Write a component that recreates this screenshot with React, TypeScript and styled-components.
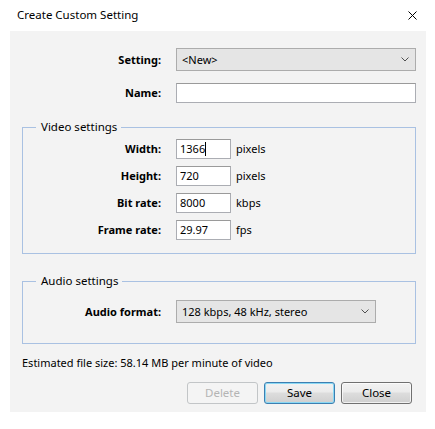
import React from "react";
import styled, { createGlobalStyle, css } from "styled-components";

const FONT = `"Noto Sans", "Open Sans", sans-serif`;

const GlobalStyle = createGlobalStyle`
  html, body { margin: 0; padding: 0; background: #ffffff; }
  body { font-family: ${FONT}; font-size: 11px; color: #000; }
  * { box-sizing: border-box; }
`;

const Window = styled.div`
  width: 435px;
  height: 429px;
  background: #ffffff;
  display: flex;
  flex-direction: column;
`;

const TitleBar = styled.div`
  height: 31px;
  display: flex;
  align-items: center;
  justify-content: space-between;
  padding: 0 18px 1px 17px;
`;

const Title = styled.div`
  font-size: 11.5px;
  line-height: 16px;
  color: #000;
`;

const CloseGlyph = styled.svg`
  width: 9px;
  height: 9px;
  display: block;
`;

const Panel = styled.div`
  margin: 0 9px 0 10px;
  height: 381px;
  background: #f3f3f3;
  padding: 17px 10px 8px 0;
  display: flex;
  flex-direction: column;
`;

const FormGrid = styled.div<{ $labelWidth: number; $gap: number }>`
  display: grid;
  grid-template-columns: ${(p) => p.$labelWidth}px 1fr;
  column-gap: 15px;
  row-gap: ${(p) => p.$gap}px;
  align-items: center;
`;

const Label = styled.div`
  justify-self: end;
  font-weight: 700;
  line-height: 16px;
  white-space: nowrap;
`;

const chevron = css`
  background-image: url("data:image/svg+xml;utf8,<svg xmlns='http://www.w3.org/2000/svg' width='8' height='5' viewBox='0 0 8 5'><path d='M0.5 0.5 L4 4 L7.5 0.5' fill='none' stroke='%23505050' stroke-width='1'/></svg>");
  background-repeat: no-repeat;
  background-position: right 6px center;
`;

const Combo = styled.div<{ $width?: number }>`
  height: 23px;
  width: ${(p) => (p.$width ? `${p.$width}px` : "100%")};
  border: 1px solid #acacac;
  background-color: #e5e5e5;
  ${chevron};
  display: flex;
  align-items: center;
  padding-left: 5px;
  line-height: 16px;
`;

const TextBox = styled.div<{ $width?: number }>`
  height: 20px;
  width: ${(p) => (p.$width ? `${p.$width}px` : "100%")};
  border: 1px solid #abadb3;
  border-top-color: #9a9a9a;
  background: #ffffff;
  display: flex;
  align-items: center;
  padding-left: 3px;
  line-height: 16px;
`;

const Caret = styled.span`
  display: inline-block;
  width: 1px;
  height: 14px;
  background: #000;
`;

const FieldWithUnit = styled.div`
  display: flex;
  align-items: center;
  gap: 5px;
`;

const Unit = styled.span`
  line-height: 16px;
`;

const Group = styled.fieldset<{ $top: number; $pt: number; $pb: number }>`
  margin: ${(p) => p.$top}px 0 0 12px;
  padding: ${(p) => p.$pt}px 0 ${(p) => p.$pb}px 0;
  border: 1px solid #a9c1e2;
  min-width: 0;
`;

const Legend = styled.legend`
  margin-left: 13px;
  padding: 0 4px 0 5px;
  line-height: 16px;
  font-size: 11.5px;
`;

const Estimate = styled.div`
  margin: 11px 0 0 12px;
  line-height: 16px;
`;

const ButtonRow = styled.div`
  margin-top: 11px;
  display: flex;
  justify-content: flex-end;
  gap: 6px;
  padding-right: 4px;
`;

const Button = styled.button<{ $variant?: "default" | "disabled" }>`
  width: 71px;
  height: 22px;
  font-family: ${FONT};
  font-size: 11.5px;
  line-height: 16px;
  padding: 0;
  border-radius: 3px;
  color: #000;
  border: 1px solid #707070;
  background: linear-gradient(#f2f2f2 0%, #ebebeb 45%, #dddddd 50%, #cfcfcf 100%);
  box-shadow: inset 0 0 0 1px rgba(255, 255, 255, 0.7);
  ${(p) =>
    p.$variant === "default" &&
    css`
      border-color: #3c7fb1;
      box-shadow: inset 0 0 0 1px #8ad8f4;
    `}
  ${(p) =>
    p.$variant === "disabled" &&
    css`
      border-color: #c2c5c7;
      background: #f4f4f4;
      color: #b4b4b4;
      box-shadow: none;
    `}
`;

export default function App() {
  return (
    <>
      <GlobalStyle />
      <Window>
        <TitleBar>
          <Title>Create Custom Setting</Title>
          <CloseGlyph viewBox="0 0 9 9">
            <path d="M0.5 0.5 L8.5 8.5 M8.5 0.5 L0.5 8.5" stroke="#000" strokeWidth="1" fill="none" />
          </CloseGlyph>
        </TitleBar>
        <Panel>
          <FormGrid $labelWidth={151} $gap={12}>
            <Label>Setting:</Label>
            <Combo>&lt;New&gt;</Combo>
            <Label>Name:</Label>
            <TextBox />
          </FormGrid>

          <Group $top={16} $pt={4} $pb={13}>
            <Legend>Video settings</Legend>
            <FormGrid $labelWidth={138} $gap={7}>
              <Label>Width:</Label>
              <FieldWithUnit>
                <TextBox $width={55}>
                  1366
                  <Caret />
                </TextBox>
                <Unit>pixels</Unit>
              </FieldWithUnit>
              <Label>Height:</Label>
              <FieldWithUnit>
                <TextBox $width={55}>720</TextBox>
                <Unit>pixels</Unit>
              </FieldWithUnit>
              <Label>Bit rate:</Label>
              <FieldWithUnit>
                <TextBox $width={55}>8000</TextBox>
                <Unit>kbps</Unit>
              </FieldWithUnit>
              <Label>Frame rate:</Label>
              <FieldWithUnit>
                <TextBox $width={55}>29.97</TextBox>
                <Unit>fps</Unit>
              </FieldWithUnit>
            </FormGrid>
          </Group>

          <Group $top={19} $pt={11} $pb={20}>
            <Legend>Audio settings</Legend>
            <FormGrid $labelWidth={138} $gap={7}>
              <Label>Audio format:</Label>
              <Combo $width={200}>128 kbps, 48 kHz, stereo</Combo>
            </FormGrid>
          </Group>

          <Estimate>Estimated file size: 58.14 MB per minute of video</Estimate>

          <ButtonRow>
            <Button $variant="disabled" disabled>
              Delete
            </Button>
            <Button $variant="default">Save</Button>
            <Button>Close</Button>
          </ButtonRow>
        </Panel>
      </Window>
    </>
  );
}
